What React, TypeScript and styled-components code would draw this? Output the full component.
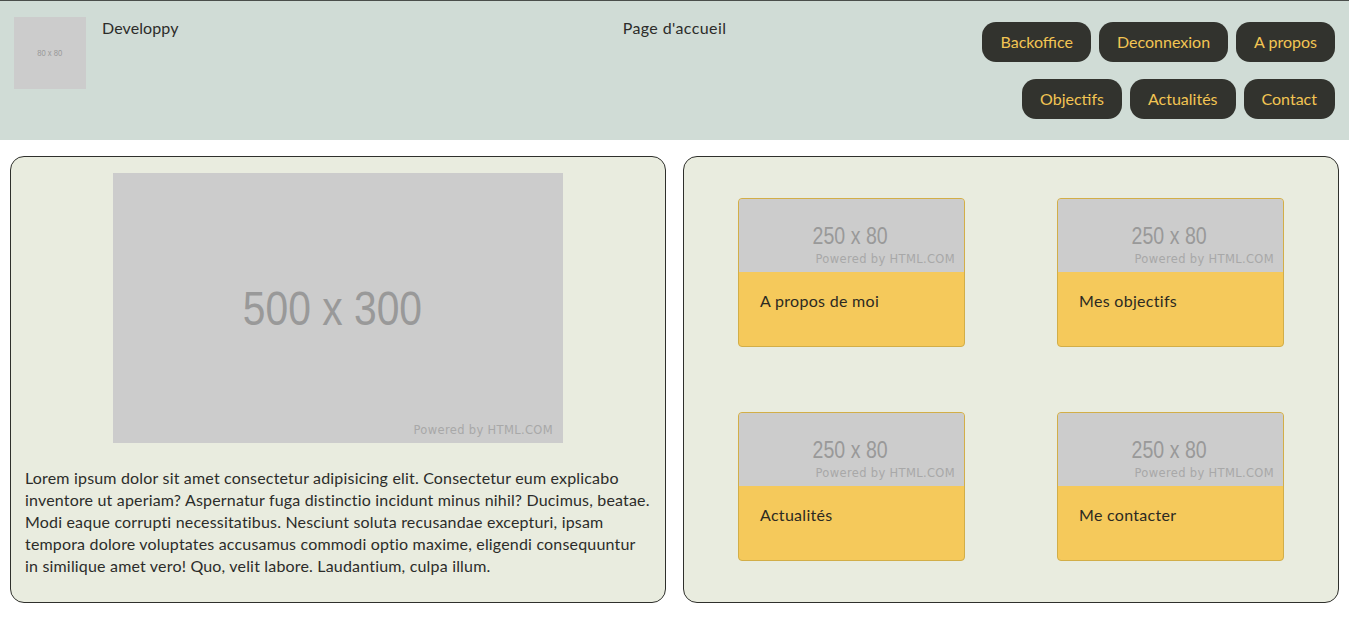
import styled, { createGlobalStyle } from "styled-components";

const GlobalStyle = createGlobalStyle`
  html, body {
    margin: 0;
    padding: 0;
  }
  body {
    font-family: Lato, "Noto Sans", sans-serif;
    color: #2c2c2a;
    background: #ffffff;
  }
  * {
    box-sizing: border-box;
  }
`

const Page = styled.div`
  width: 1349px;
  min-height: 650px;
  border-top: 1px solid #4a4e4b;
`

const Header = styled.header`
  display: grid;
  grid-template-columns: 1fr auto 1fr;
  height: 139px;
  padding: 16px 14px 0 14px;
  background: #d0dcd6;
`

const Brand = styled.div`
  display: flex;
  align-items: flex-start;
  gap: 16px;
`

const BrandName = styled.div`
  font-size: 16px;
  line-height: 22px;
  letter-spacing: 0.1px;
`

const PageTitle = styled.div`
  font-size: 16px;
  line-height: 22px;
  letter-spacing: 0.4px;
  text-align: center;
`

const Nav = styled.nav`
  display: flex;
  flex-direction: column;
  align-items: flex-end;
  gap: 17px;
  padding-top: 5px;
`

const NavRow = styled.div`
  display: flex;
  gap: 8px;
`

const NavButton = styled.button`
  height: 40px;
  padding: 0 18px 2px 18px;
  border: none;
  border-radius: 14px;
  background: #32332e;
  color: #f3c553;
  font-family: Lato, "Noto Sans", sans-serif;
  font-size: 16px;
  cursor: pointer;
`

const Main = styled.main`
  display: grid;
  grid-template-columns: 1fr 1fr;
  gap: 17px;
  padding: 16px 10px;
`

const Card = styled.section`
  height: 447px;
  border: 1px solid #2f302c;
  border-radius: 14px;
  background: #e9ecdf;
`

const IntroCard = styled(Card)`
  display: flex;
  flex-direction: column;
  align-items: center;
  padding: 16px 14px 0 14px;
`

const Placeholder = styled.div<{ $w: number; $h: number }>`
  position: relative;
  display: flex;
  align-items: center;
  justify-content: center;
  width: ${({ $w }) => $w}px;
  height: ${({ $h }) => $h}px;
  flex-shrink: 0;
  background: #cccccc;
  color: #999999;
  font-family: "Liberation Sans", Arial, sans-serif;
`

// the placeholder service draws its size label in a narrow face
const SizeLabel = styled.span<{ $size: number; $dy?: number; $dx?: number }>`
  display: inline-block;
  font-size: ${({ $size }) => $size}px;
  transform: translate(${({ $dx = 0 }) => $dx}px, ${({ $dy = 0 }) => $dy}px) scaleX(0.85);
`

const Powered = styled.span<{ $size: number; $bottom: number; $right: number }>`
  position: absolute;
  right: ${({ $right }) => $right}px;
  bottom: ${({ $bottom }) => $bottom}px;
  font-family: "DejaVu Sans", Verdana, sans-serif;
  font-size: ${({ $size }) => $size}px;
  letter-spacing: 0.03em;
  color: #a8a8a8;
`

const IntroText = styled.p`
  margin: 24px 0 0 0;
  font-size: 16px;
  line-height: 22px;
  letter-spacing: 0.18px;
  color: #2c2c2a;
`

const TilesCard = styled(Card)`
  display: grid;
  grid-template-columns: 1fr 1fr;
  grid-template-rows: 1fr 1fr;
  padding: 8px;
  place-items: center;
`

const Tile = styled.a`
  display: flex;
  flex-direction: column;
  width: 227px;
  height: 149px;
  border: 1px solid #d2ae48;
  border-radius: 4px;
  overflow: hidden;
  background: #f5c95b;
  color: #2c2a22;
  text-decoration: none;
`

const TileLabel = styled.div`
  padding: 18px 0 0 21px;
  font-size: 16px;
  line-height: 22px;
  letter-spacing: 0.3px;
`

const tiles = ["A propos de moi", "Mes objectifs", "Actualités", "Me contacter"];

export default function App() {
  return (
    <Page>
      <GlobalStyle />
      <Header>
        <Brand>
          <Placeholder $w={72} $h={72}>
            <SizeLabel $size={9}>80 x 80</SizeLabel>
          </Placeholder>
          <BrandName>Developpy</BrandName>
        </Brand>
        <PageTitle>Page d'accueil</PageTitle>
        <Nav>
          <NavRow>
            <NavButton>Backoffice</NavButton>
            <NavButton>Deconnexion</NavButton>
            <NavButton>A propos</NavButton>
          </NavRow>
          <NavRow>
            <NavButton>Objectifs</NavButton>
            <NavButton>Actualités</NavButton>
            <NavButton>Contact</NavButton>
          </NavRow>
        </Nav>
      </Header>
      <Main>
        <IntroCard>
          <Placeholder $w={450} $h={270}>
            <SizeLabel $size={48} $dx={-6}>500 x 300</SizeLabel>
            <Powered $size={11.5} $bottom={6} $right={10}>Powered by HTML.COM</Powered>
          </Placeholder>
          <IntroText>
            Lorem ipsum dolor sit amet consectetur adipisicing elit. Consectetur eum explicabo
            inventore ut aperiam? Aspernatur fuga distinctio incidunt minus nihil? Ducimus, beatae.
            Modi eaque corrupti necessitatibus. Nesciunt soluta recusandae excepturi, ipsam
            tempora dolore voluptates accusamus commodi optio maxime, eligendi consequuntur
            in similique amet vero! Quo, velit labore. Laudantium, culpa illum.
          </IntroText>
        </IntroCard>
        <TilesCard>
          {tiles.map((label) => (
            <Tile key={label} href="#">
              <Placeholder $w={227} $h={73}>
                <SizeLabel $size={23} $dx={-2} $dy={1}>250 x 80</SizeLabel>
                <Powered $size={11.5} $bottom={6} $right={11}>Powered by HTML.COM</Powered>
              </Placeholder>
              <TileLabel>{label}</TileLabel>
            </Tile>
          ))}
        </TilesCard>
      </Main>
    </Page>
  );
}
